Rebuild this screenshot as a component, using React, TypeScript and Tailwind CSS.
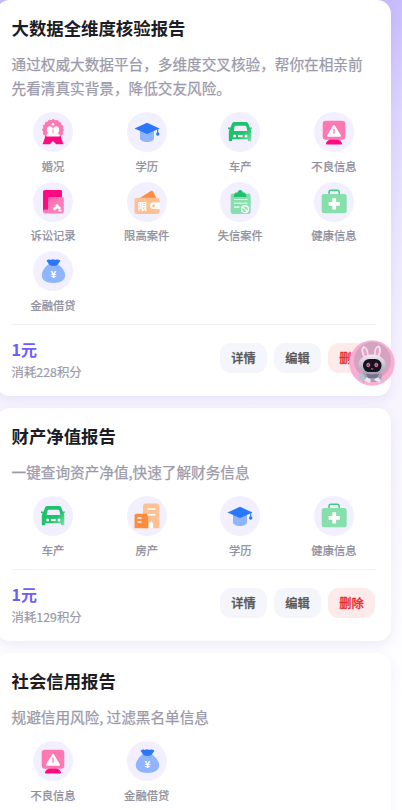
import React from 'react';

type IconName =
  | 'marriage'
  | 'education'
  | 'car'
  | 'warning'
  | 'lawsuit'
  | 'limit'
  | 'dishonest'
  | 'health'
  | 'loan'
  | 'house';

interface ReportItem {
  icon: IconName;
  label: string;
}

interface Report {
  title: string;
  desc: string;
  items: ReportItem[];
  price?: string;
  points?: number;
}

const ITEMS: Record<IconName, ReportItem> = {
  marriage: { icon: 'marriage', label: '婚况' },
  education: { icon: 'education', label: '学历' },
  car: { icon: 'car', label: '车产' },
  warning: { icon: 'warning', label: '不良信息' },
  lawsuit: { icon: 'lawsuit', label: '诉讼记录' },
  limit: { icon: 'limit', label: '限高案件' },
  dishonest: { icon: 'dishonest', label: '失信案件' },
  health: { icon: 'health', label: '健康信息' },
  loan: { icon: 'loan', label: '金融借贷' },
  house: { icon: 'house', label: '房产' },
};

const reports: Report[] = [
  {
    title: '大数据全维度核验报告',
    desc: '通过权威大数据平台，多维度交叉核验，帮你在相亲前先看清真实背景，降低交友风险。',
    items: [
      ITEMS.marriage,
      ITEMS.education,
      ITEMS.car,
      ITEMS.warning,
      ITEMS.lawsuit,
      ITEMS.limit,
      ITEMS.dishonest,
      ITEMS.health,
      ITEMS.loan,
    ],
    price: '1元',
    points: 228,
  },
  {
    title: '财产净值报告',
    desc: '一键查询资产净值,快速了解财务信息',
    items: [ITEMS.car, ITEMS.house, ITEMS.education, ITEMS.health],
    price: '1元',
    points: 129,
  },
  {
    title: '社会信用报告',
    desc: '规避信用风险, 过滤黑名单信息',
    items: [ITEMS.warning, ITEMS.loan],
  },
];

const glyphs: Record<IconName, React.ReactNode> = {
  marriage: (
    <>
      <circle cx="20" cy="18" r="10.2" fill="#ff78b4" />
      <circle cx="20" cy="18" r="9.6" fill="none" stroke="#ff78b4" strokeWidth="2.6" strokeDasharray="0 3.770" strokeLinecap="round" />
      <path d="M12.500 24h15l2.900 8.300h-7.200L20 29l-3.200 3.300H9.600z" fill="#ff0a80" />
      <path d="M13.300 24.500c0-1.600.8-2.600 2-3.200-1.200-1-1.500-2.600-1.500-3.600 0-2 1.200-3.400 3-3.400 1.600 0 2.800 1 3.100 2.400h.2c.3-1.400 1.500-2.400 3.100-2.400 1.800 0 3 1.400 3 3.400 0 1-.3 2.600-1.500 3.600 1.200.6 2 1.600 2 3.200z" fill="#fff" />
      <path d="M20 17.500v4" stroke="#ff78b4" strokeWidth=".9" />
      <circle cx="20" cy="12.300" r="1.300" fill="#fff" />
    </>
  ),
  education: (
    <>
      <path d="M13 18.500h14v8c0 1.700-3 3.500-7 3.500s-7-1.800-7-3.500z" fill="#8fb5ff" />
      <path d="M7.500 16.500 20 10.800l12.500 5.700L20 22z" fill="#2b77fb" />
      <path d="M30.700 16.500v5" stroke="#2b77fb" strokeWidth="1.100" />
      <circle cx="30.700" cy="22" r="1.700" fill="#2b77fb" />
    </>
  ),
  car: (
    <>
      <defs>
        <linearGradient id="carPaint" x1="0" y1="0" x2="1" y2="1">
          <stop offset="0.6" stopColor="#1fc26b" />
          <stop offset="1" stopColor="#87dfac" />
        </linearGradient>
      </defs>
      <path
        fillRule="evenodd"
        d="M14.500 10h11.300c1.200 0 2 .500 2.400 1.500l1.700 4.200 1.800-.400v1.700l-1.200.500c.500.700.800 1.500.800 2.400v8.300c0 .700-.300 1-.900 1h-1.600c-.600 0-.900-.400-.900-1v-1H12.200v1c0 .600-.300 1-.900 1H9.700c-.600 0-.9-.3-.9-1V20c0-.900.300-1.700.800-2.400L8 17v-1.700l2.300.500 1.800-4.300c.400-1 1.200-1.500 2.400-1.500zm1.300 3.800c-.6 0-1 .3-1.200 1l-.9 4.200h13.600l-.9-4.200c-.2-.7-.6-1-1.200-1z"
        fill="url(#carPaint)"
      />
      <circle cx="14.700" cy="24" r="1.500" fill="#fff" />
      <circle cx="26" cy="24" r="1.500" fill="#fff" />
      <path d="M18 24h4.700" stroke="#fff" strokeWidth="2.200" />
    </>
  ),
  warning: (
    <>
      <path d="M20 25c2 1 7.800 4 8 6.500 0 .600-.400 1-1 1H13c-.600 0-1-.400-1-1C12.200 29 18 26 20 25z" fill="#ff0a80" />
      <rect x="8.700" y="8.700" width="22.600" height="19" rx="3.200" fill="#ff78b4" />
      <path d="M20 14 26 23.700H14z" fill="#fff" stroke="#fff" strokeWidth="2" strokeLinejoin="round" />
      <path d="M20 16.800v5" stroke="#ff78b4" strokeWidth="1.300" />
    </>
  ),
  lawsuit: (
    <>
      <defs>
        <linearGradient id="lawPage" x1="0" y1="0" x2="1" y2="1">
          <stop offset="0" stopColor="#ff4f9f" />
          <stop offset="0.5" stopColor="#ff7db8" />
        </linearGradient>
      </defs>
      <path d="M12 8h15.500c1 0 1.500.500 1.500 1.500v20H12c-1.200 0-2-.800-2-2V10c0-1.200.800-2 2-2z" fill="#ff0a80" />
      <path d="M17 15h12c1.200 0 1.800.6 1.800 1.800v12.700c0 1.300-.7 2-2 2H12c-1.200 0-2-.9-2-2 0-1.200.8-2 2-2h3V17c0-1.300.7-2 2-2z" fill="url(#lawPage)" />
      <path d="m20.700 27.300 4-2.700M23.200 22.500l4 4.600" stroke="#fff" strokeWidth="2.600" />
      <path d="M25.500 28.600h3" stroke="#fff" strokeWidth="1.600" />
    </>
  ),
  limit: (
    <>
      <path d="m10.500 17.500 13.300-8.600c.900-.500 1.700-.300 2.200.500l4.200 8.100z" fill="#ff8b3d" />
      <rect x="7.500" y="15.800" width="25" height="16.200" rx="2.300" fill="#ffc093" />
      <path d="M33 20.500h-6.800c-1.900 0-3.200 1.300-3.200 3.200s1.300 3.200 3.200 3.200H33z" fill="#fff" />
      <circle cx="26.500" cy="23.700" r="1.300" fill="#ffb27c" />
      <text x="10.800" y="27.500" fontSize="9.500" fontWeight="700" fill="#fff">限</text>
    </>
  ),
  dishonest: (
    <>
      <rect x="10.700" y="11.500" width="20" height="20.500" rx="2.200" fill="#87dfac" />
      <path d="M17.500 10.500c.300-1.500 1.200-2.500 2.700-2.500s2.400 1 2.700 2.500h1.600c1.200 1.200 2 2.800 2 4.500H13.700c0-1.700.800-3.300 2-4.500z" fill="#1fc26b" />
      <path d="M14 17.500h13.500M14 21.300h13.500M14 25.100h5.500" stroke="#fff" strokeWidth="1.100" />
      <circle cx="25" cy="27.200" r="3.400" fill="#87dfac" stroke="#fff" strokeWidth="1.400" />
      <path d="m22.800 25 4.400 4.400" stroke="#fff" strokeWidth="1.300" />
    </>
  ),
  health: (
    <>
      <path d="M15 13v-2.800c0-1.200.800-2 2-2h6.200c1.200 0 2 .800 2 2V13" fill="none" stroke="#45cc83" strokeWidth="1.500" />
      <rect x="7.700" y="12" width="25" height="19.300" rx="2.500" fill="#87dfac" />
      <path d="M20.200 16.300v11.200M14.600 21.900h11.200" stroke="#fff" strokeWidth="3.800" />
    </>
  ),
  loan: (
    <>
      <path d="M16 13h8.500c4.500 3 7.700 7.200 7.700 11.300 0 4.800-4.500 7.700-11.800 7.700S8.800 29.100 8.800 24.300c0-4.100 2.900-8.300 7.200-11.300z" fill="#8fb5ff" />
      <path d="M13.500 9.800c1-.900 2.500-1.700 4-.900 1.500-.900 3.500-.900 5 0 1.700-.800 3.500-.300 5 .800l-3.200 4.300c-2.300 1.300-5.600 1.300-7.800 0z" fill="#2b77fb" />
      <text x="20.500" y="26.500" fontSize="10" fontWeight="700" fill="#fff" textAnchor="middle">¥</text>
    </>
  ),
  house: (
    <>
      <path d="M18.500 7.500h11c1.700 0 2.800 1.100 2.800 2.800v22H16V10.300c0-1.700 1-2.800 2.500-2.800z" fill="#ffc093" />
      <path d="M9.500 17.800H21v14.500H7.500V19.800c0-1.200.800-2 2-2z" fill="#ff8b3d" />
      <path d="M20.200 13h8.300M20.200 18.700h8.300M10.500 21.900h4M10.500 26h4" stroke="#fff" strokeWidth="1.600" />
      <path d="M21.800 32.500v-4.800c0-2.700 4.200-2.700 4.200 0v4.800z" fill="#fff" />
    </>
  ),
};

const ItemIcon: React.FC<{ name: IconName }> = ({ name }) => (
  <div className="h-10 w-10 rounded-full bg-[#f2f0ff]">
    <svg viewBox="0 0 40 40" className="h-10 w-10">
      {glyphs[name]}
    </svg>
  </div>
);

const ReportCard: React.FC<{ report: Report }> = ({ report }) => (
  <section className="rounded-[14px] bg-white px-[15.500px] pt-4 pb-[13.500px] shadow-[0_4px_12px_rgba(90,60,170,0.09)] last:min-h-[200px]">
    <h2 className="text-[17.400px] leading-6 font-bold text-[#1c1c24]">{report.title}</h2>
    <p className="mt-3 text-[14.630px] leading-6 text-[#9b9aaa] [-webkit-text-stroke:0.25px]">{report.desc}</p>

    <div className="mt-[12.500px] grid grid-cols-4 gap-x-[10.500px] gap-y-[9px]">
      {report.items.map((item) => (
        <div key={item.label} className="flex flex-col items-center">
          <ItemIcon name={item.icon} />
          <span className="mt-[6.500px] text-[11.300px] leading-[14px] text-[#8e8d9b] [-webkit-text-stroke:0.25px]">
            {item.label}
          </span>
        </div>
      ))}
    </div>

    {report.price && (
      <div className="mt-3 flex items-center justify-between border-t border-[#f3f3f6] pt-3">
        <div>
          <div className="text-base leading-6 font-bold text-[#6c5cff]">{report.price}</div>
          <div className="text-[12.400px] leading-[22px] text-[#9b9aa7] [-webkit-text-stroke:0.2px]">
            消耗{report.points}积分
          </div>
        </div>
        <div className="mr-[0.500px] mb-[3px] flex gap-[7px] text-[12.200px] leading-[31px] font-medium [-webkit-text-stroke:0.3px]">
          <button className="h-[30px] w-[47px] rounded-[11px] bg-[#f5f6fb] text-[#555555]">详情</button>
          <button className="h-[30px] w-[47px] rounded-[11px] bg-[#f5f6fb] text-[#555555]">编辑</button>
          <button className="h-[30px] w-[47px] rounded-[11px] bg-[#fdebeb] text-[#e52e2e]">删除</button>
        </div>
      </div>
    )}
  </section>
);

// floating assistant
const Mascot: React.FC = () => (
  <button className="absolute top-[340px] left-[348.500px] h-[46px] w-[46px]">
    <svg viewBox="0 0 46 46" className="h-full w-full">
      <defs>
        <linearGradient id="suit" x1="0" y1="0" x2="0" y2="1">
          <stop offset="0" stopColor="#f2ecf5" />
          <stop offset="1" stopColor="#a09bb2" />
        </linearGradient>
      </defs>
      <circle cx="23" cy="23" r="22.700" fill="#fbaed3" />
      <circle cx="23.500" cy="20.500" r="18.500" fill="#d3a3c0" />
      <path d="M13 34c2-4 18-4 20 0l-1 8H14z" fill="#a79fb3" />
      <path d="M9.500 35c2-3 5-2 6 1l2 5c-4 1-7-1-8-3z" fill="#b9c0d0" />
      <path d="m15 41 3-4 4 3-1 3zm10-1 3-3 4 3-1 3z" fill="#e9e7ef" />
      <path d="M17 34h13l-2 4h-9z" fill="#77738a" />
      <ellipse cx="16" cy="12.500" rx="3.300" ry="6.500" fill="#eee4ef" transform="rotate(-15 16 12.500)" />
      <ellipse cx="28.500" cy="12" rx="3.300" ry="6.500" fill="#eee4ef" transform="rotate(10 28.500 12)" />
      <ellipse cx="16.200" cy="12.700" rx="1.500" ry="4.500" fill="#ee9fc7" transform="rotate(-15 16.200 12.700)" />
      <ellipse cx="28.300" cy="12" rx="1.500" ry="4.500" fill="#ee9fc7" transform="rotate(10 28.300 12)" />
      <ellipse cx="23" cy="24.500" rx="13.500" ry="10" fill="url(#suit)" />
      <rect x="14" y="19" width="18.500" height="13" rx="6.300" fill="#15131d" />
      <ellipse cx="19.300" cy="25" rx="1.500" ry="1.800" fill="#a34a70" stroke="#ee87aa" strokeWidth=".9" />
      <ellipse cx="27.300" cy="25" rx="1.500" ry="1.800" fill="#a34a70" stroke="#ee87aa" strokeWidth=".9" />
      <path d="M22 28.500q1.200 1.500 2.300 0" fill="none" stroke="#ee87aa" strokeWidth=".9" />
    </svg>
  </button>
);

export default function App() {
  return (
    <main
      lang="zh-CN"
      className="relative h-[810px] w-[402px] overflow-hidden bg-[linear-gradient(180deg,#c8bcff_0px,#ddd5ff_110px,#eae5ff_220px,#f6f3ff_360px,#faf8ff_520px,#ffffff_700px)] font-['Noto_Sans_CJK_SC',sans-serif]"
    >
      <div className="-mt-[0.500px] -ml-1 flex w-[395px] flex-col gap-[11.500px]">
        {reports.map((report) => (
          <ReportCard key={report.title} report={report} />
        ))}
      </div>
      <Mascot />
    </main>
  );
}
